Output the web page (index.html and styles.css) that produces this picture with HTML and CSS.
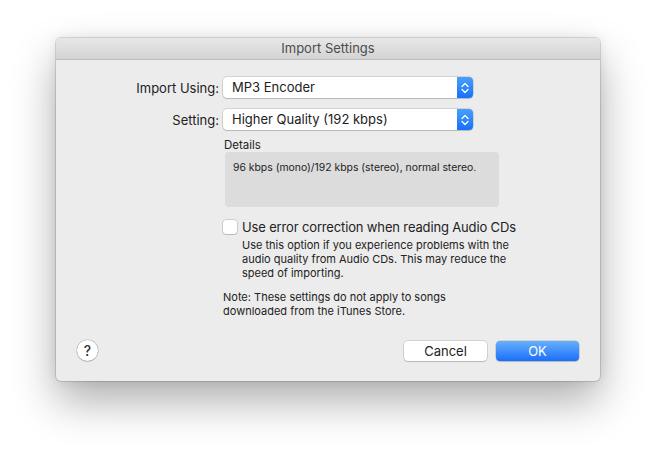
FILE: index.html
```html
<!DOCTYPE html>
<html lang="en">
<head>
  <meta charset="UTF-8">
  <meta name="viewport" content="width=device-width, initial-scale=1.0">
  <title>Import Settings</title>
  <link rel="stylesheet" href="styles.css">
</head>
<body>
  <div class="dialog">
    <div class="titlebar">Import Settings</div>
    <div class="content">
      <div class="form-row">
        <div class="form-label">Import Using:</div>
        <div class="popup">
          <span class="popup-value">MP3 Encoder</span>
          <span class="popup-arrows">
            <svg width="8" height="12" viewBox="0 0 8 12"><path d="M1 4.5 L4 1.5 L7 4.5 M1 7.5 L4 10.5 L7 7.5" fill="none" stroke="#fff" stroke-width="1.3" stroke-linecap="round" stroke-linejoin="round"/></svg>
          </span>
        </div>
      </div>
      <div class="form-row">
        <div class="form-label">Setting:</div>
        <div class="popup">
          <span class="popup-value">Higher Quality (192 kbps)</span>
          <span class="popup-arrows">
            <svg width="8" height="12" viewBox="0 0 8 12"><path d="M1 4.5 L4 1.5 L7 4.5 M1 7.5 L4 10.5 L7 7.5" fill="none" stroke="#fff" stroke-width="1.3" stroke-linecap="round" stroke-linejoin="round"/></svg>
          </span>
        </div>
      </div>

      <div class="options">
        <div class="details-label">Details</div>
        <div class="details-box">96 kbps (mono)/192 kbps (stereo), normal stereo.</div>

        <label class="check-row">
          <span class="checkbox"></span>
          <span class="check-text">Use error correction when reading Audio CDs</span>
        </label>
        <div class="check-help">Use this option if you experience problems with the audio quality from Audio CDs. This may reduce the speed of importing.</div>

        <div class="note">Note: These settings do not apply to songs<br>downloaded from the iTunes Store.</div>
      </div>

      <div class="buttons">
        <button class="help-btn">?</button>
        <div class="btn-group">
          <button class="btn">Cancel</button>
          <button class="btn btn-default">OK</button>
        </div>
      </div>
    </div>
  </div>
</body>
</html>
```

FILE: styles.css
```css
html {
  background: #fff;
}

body {
  margin: 0;
  height: 455px;
  padding-top: 38px;
  box-sizing: border-box;
  font-family: 'Inter', 'Liberation Sans', sans-serif;
  color: #222;
}

.dialog {
  width: 544px;
  height: 343px;
  margin-left: 56px;
  background: #ececec;
  border-radius: 5px;
  box-shadow: 0 0 0 1px rgba(0, 0, 0, 0.12), 0 0 12px rgba(0, 0, 0, 0.08), 0 20px 44px rgba(0, 0, 0, 0.32);
  overflow: hidden;
}

.titlebar {
  height: 21px;
  line-height: 21px;
  text-align: center;
  font-size: 13px;
  color: #4c4c4c;
  background: linear-gradient(#e8e7e8, #d5d4d5);
  border-bottom: 1px solid #bdbdbd;
}

.content {
  padding: 17px 21px 0 21px;
}

.form-row {
  display: flex;
  align-items: center;
  margin-bottom: 11px;
}

.form-label {
  width: 142px;
  text-align: right;
  font-size: 13px;
  margin-right: 4px;
}

.popup {
  width: 250px;
  height: 21px;
  display: flex;
  background: #fff;
  border-radius: 4px;
  box-shadow: 0 0 0 0.5px rgba(0, 0, 0, 0.22), 0 1px 1px rgba(0, 0, 0, 0.12);
  overflow: hidden;
}

.popup-value {
  flex: 1;
  font-size: 13px;
  line-height: 21px;
  padding-left: 9px;
}

.popup-arrows {
  width: 16px;
  display: flex;
  align-items: center;
  justify-content: center;
  background: linear-gradient(#4aa0fc, #1571fb);
}

.options {
  margin-left: 146px;
  margin-top: -3px;
}

.details-label {
  font-size: 11.5px;
  line-height: 14px;
  padding-left: 1px;
}

.details-box {
  width: 274px;
  height: 55px;
  box-sizing: border-box;
  margin-left: 2px;
  padding: 9px 8px;
  font-size: 10.4px;
  line-height: 14px;
  background: #dcdcdc;
  border-radius: 4px;
}

.check-row {
  display: flex;
  align-items: center;
  margin-top: 12px;
  height: 16px;
}

.checkbox {
  width: 14px;
  height: 14px;
  box-sizing: border-box;
  background: #fff;
  border-radius: 3px;
  box-shadow: 0 0 0 0.5px rgba(0, 0, 0, 0.25), 0 1px 1px rgba(0, 0, 0, 0.1);
  margin-right: 5px;
}

.check-text {
  font-size: 13px;
  letter-spacing: -0.15px;
}

.check-help {
  width: 280px;
  margin: 3px 0 0 19px;
  font-size: 11px;
  line-height: 14px;
}

.note {
  margin-top: 10px;
  font-size: 11px;
  line-height: 14px;
}

.buttons {
  display: flex;
  justify-content: space-between;
  align-items: center;
  margin-top: 22px;
}

.help-btn {
  width: 21px;
  height: 21px;
  padding: 0;
  border: none;
  border-radius: 50%;
  background: #fff;
  box-shadow: 0 0 0 0.5px rgba(0, 0, 0, 0.25), 0 1px 1px rgba(0, 0, 0, 0.12);
  font-family: inherit;
  font-size: 14px;
  font-weight: 500;
  color: #333;
}

.btn-group {
  display: flex;
  gap: 9px;
}

.btn {
  width: 83px;
  height: 20px;
  padding: 0;
  border: none;
  border-radius: 4px;
  background: #fff;
  box-shadow: 0 0 0 0.5px rgba(0, 0, 0, 0.22), 0 1px 1px rgba(0, 0, 0, 0.12);
  font-family: inherit;
  font-size: 13px;
  color: #222;
}

.btn-default {
  color: #fff;
  background: linear-gradient(#68b0fc, #1a6ffb);
}
```
